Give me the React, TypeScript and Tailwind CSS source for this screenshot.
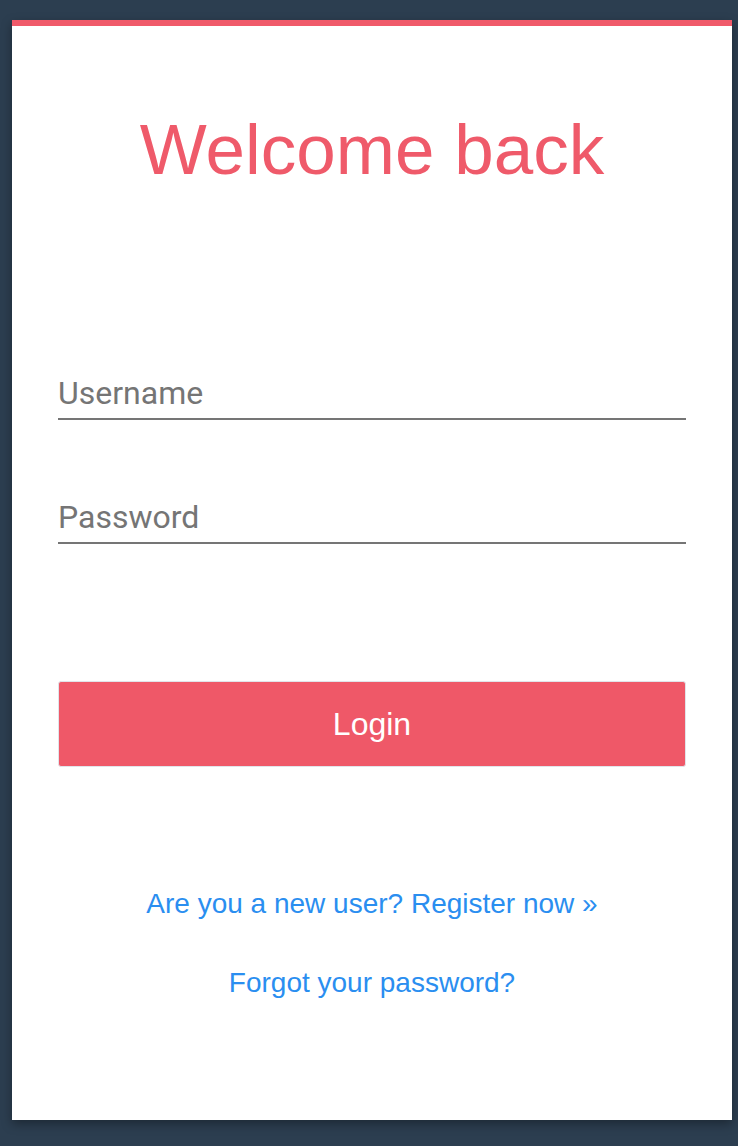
export default function App() {
  return (
    <div className="min-h-screen bg-[#2c3e50] pt-[20px] pl-[12px]">
      <div className="w-[720px] bg-white border-t-[6px] border-[#f05a6a] px-[46px] pt-[84px] pb-[117px] shadow-[0_4px_10px_rgba(0,0,0,0.35)] font-['Liberation_Sans',Arial,sans-serif]">
        <h1 className="text-center text-[71px] leading-[80px] text-[#ef5a6a] font-normal">
          Welcome back
        </h1>

        <form className="mt-[177px] flex flex-col" onSubmit={(e) => e.preventDefault()}>
          <input
            type="text"
            placeholder="Username"
            className="h-[53px] w-full border-b-2 border-[#757575] bg-transparent font-['Roboto',sans-serif] text-[32px] text-[#333] placeholder:text-[#757575] outline-none"
          />
          <input
            type="password"
            placeholder="Password"
            className="mt-[71px] h-[53px] w-full border-b-2 border-[#757575] bg-transparent font-['Roboto',sans-serif] text-[32px] text-[#333] placeholder:text-[#757575] outline-none"
          />

          <button
            type="submit"
            className="mt-[137px] h-[86px] w-full rounded-[3px] border border-[#e1e4ea] bg-[#ef5868] text-[32px] text-white"
          >
            Login
          </button>
        </form>

        <div className="mt-[117px] flex flex-col items-center text-[28px] leading-[40px] text-[#2a8ef0]">
          <a href="#">Are you a new user? Register now &raquo;</a>
          <a href="#" className="mt-[39px]">
            Forgot your password?
          </a>
        </div>
      </div>
    </div>
  );
}
